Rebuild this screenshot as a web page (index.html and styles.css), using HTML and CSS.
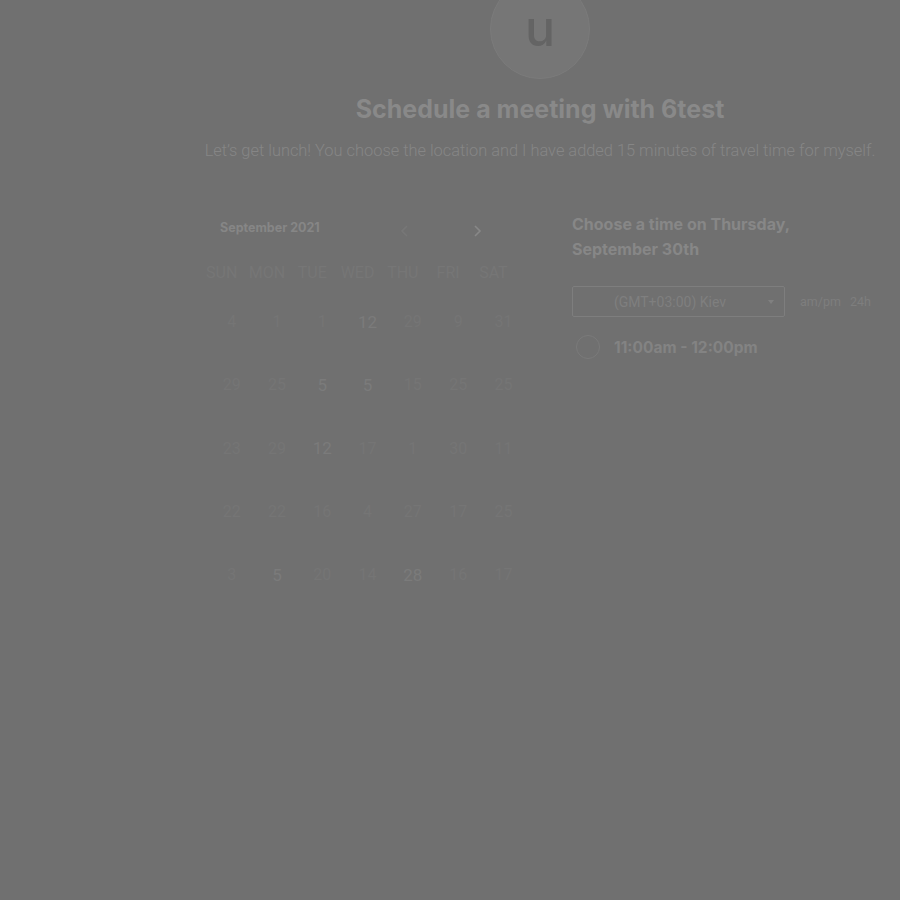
FILE: index.html
```html
<!DOCTYPE html>
<html>
<head>
<meta charset="utf-8">
<link rel="stylesheet" href="styles.css">
</head>
<body>
<div class="page">
  <div class="avatar"><span>u</span></div>
  <h1 class="title">Schedule a meeting with 6test</h1>
  <p class="subtitle">Let’s get lunch! You choose the location and I have added 15 minutes of travel time for myself.</p>
  <div class="booking">
    <div class="calendar">
      <div class="cal-head">
        <span class="month">September 2021</span>
        <div class="nav">
          <svg class="arrow dim" width="10" height="14" viewBox="0 0 10 14"><path d="M7 2 L2 7 L7 12" fill="none" stroke="currentColor" stroke-width="1.6"/></svg>
          <svg class="arrow" width="10" height="14" viewBox="0 0 10 14"><path d="M3 2 L8 7 L3 12" fill="none" stroke="currentColor" stroke-width="1.6"/></svg>
        </div>
      </div>
      <div class="grid">
        <div class="dow">SUN</div><div class="dow">MON</div><div class="dow">TUE</div><div class="dow">WED</div><div class="dow">THU</div><div class="dow">FRI</div><div class="dow">SAT</div>
        <div class="d">4</div><div class="d">1</div><div class="d">1</div><div class="d on">12</div><div class="d">29</div><div class="d">9</div><div class="d">31</div>
        <div class="d">29</div><div class="d">25</div><div class="d on">5</div><div class="d on">5</div><div class="d">15</div><div class="d">25</div><div class="d">25</div>
        <div class="d">23</div><div class="d">29</div><div class="d on">12</div><div class="d">17</div><div class="d">1</div><div class="d">30</div><div class="d">11</div>
        <div class="d">22</div><div class="d">22</div><div class="d">16</div><div class="d">4</div><div class="d">27</div><div class="d">17</div><div class="d">25</div>
        <div class="d">3</div><div class="d on">5</div><div class="d">20</div><div class="d">14</div><div class="d on">28</div><div class="d">16</div><div class="d">17</div>
      </div>
    </div>
    <div class="times">
      <h2 class="choose">Choose a time on Thursday, September 30th</h2>
      <div class="tzrow">
        <div class="select"><span>(GMT+03:00) Kiev</span><span class="caret"></span></div>
        <div class="fmt"><span>am/pm</span><span>24h</span></div>
      </div>
      <div class="slot">
        <span class="radio"></span>
        <span class="slot-text">11:00am - 12:00pm</span>
      </div>
    </div>
  </div>
</div>
</body>
</html>
```
FILE: styles.css
```css
html, body {
  margin: 0;
  padding: 0;
  background: #707070;
  height: 100%;
  overflow: hidden;
}
body {
  font-family: Inter, "Liberation Sans", sans-serif;
}
.page {
  margin-left: 180px;
  width: 720px;
  display: flex;
  flex-direction: column;
  align-items: center;
}
.avatar {
  width: 98px;
  height: 98px;
  margin-top: -21px;
  border-radius: 50%;
  background: #767676;
  border: 1px solid #7b7b7b;
  display: flex;
  align-items: center;
  justify-content: center;
}
.avatar span {
  font-size: 50px;
  font-weight: 500;
  color: #646464;
  margin-top: -3px;
}
.title {
  margin: 16px 0 0;
  font-size: 25px;
  font-weight: 700;
  color: #898989;
  line-height: 28px;
}
.subtitle {
  margin: 18px 0 0;
  font-family: Roboto, sans-serif;
  font-weight: 300;
  font-size: 16.4px;
  color: #868686;
  line-height: 20px;
  white-space: nowrap;
}
.booking {
  align-self: stretch;
  display: flex;
  margin-top: 54px;
  padding-left: 27px;
  gap: 55px;
}
.calendar {
  width: 310px;
}
.cal-head {
  display: flex;
  align-items: center;
  padding-left: 13px;
  height: 24px;
}
.month {
  font-size: 12.5px;
  font-weight: 700;
  color: #868686;
  width: 180px;
}
.nav {
  display: flex;
  gap: 62px;
  margin-top: 8px;
}
.arrow { color: #888; }
.arrow.dim { color: #777; }
.grid {
  display: grid;
  grid-template-columns: repeat(7, 45.3px);
  grid-template-rows: 34px;
  grid-auto-rows: 63.3px;
  margin-top: 17px;
  margin-left: -8px;
}
.dow {
  height: 34px;
  font-family: Roboto, sans-serif;
  font-size: 16px;
  color: #767676;
  text-align: center;
  line-height: 34px;
}
.d {
  font-family: Roboto, sans-serif;
  font-size: 16px;
  color: #757575;
  display: flex;
  align-items: center;
  justify-content: center;
  padding-left: 20px;
}
.d.on {
  color: #7b7b7b;
  font-size: 17px;
}
.times {
  margin-top: -3px;
}
.choose {
  margin: 0;
  font-size: 16px;
  font-weight: 700;
  color: #878787;
  line-height: 25px;
  width: 240px;
}
.tzrow {
  display: flex;
  align-items: center;
  margin-top: 24px;
}
.select {
  width: 211px;
  height: 29px;
  border: 1px solid #7e7e7e;
  border-radius: 2px;
  position: relative;
  display: flex;
  align-items: center;
  justify-content: center;
  font-family: Roboto, sans-serif;
  font-size: 14px;
  color: #7f7f7f;
}
.select span:first-child { margin-left: -17px; }
.caret {
  position: absolute;
  right: 10px;
  top: 13px;
  width: 0;
  height: 0;
  border-left: 3.5px solid transparent;
  border-right: 3.5px solid transparent;
  border-top: 4px solid #808080;
}
.fmt {
  margin-left: 15px;
  display: flex;
  gap: 9px;
  font-family: Roboto, sans-serif;
  font-size: 12.5px;
  color: #7e7e7e;
}
.slot {
  display: flex;
  align-items: center;
  margin-top: 18px;
  padding-left: 4px;
}
.radio {
  width: 24px;
  height: 24px;
  border-radius: 50%;
  border: 1.5px solid #7a7a7a;
  box-sizing: border-box;
}
.slot-text {
  margin-left: 14px;
  font-size: 15.5px;
  font-weight: 700;
  color: #838383;
}
```
